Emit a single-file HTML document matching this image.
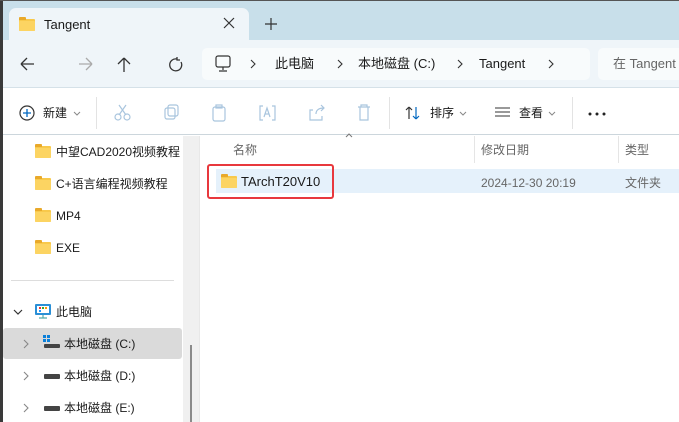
<!DOCTYPE html>
<html><head><meta charset="utf-8"><style>
*{margin:0;padding:0;box-sizing:border-box}
body{width:679px;height:422px;overflow:hidden;position:relative;background:#fff;font-family:"Liberation Sans","Noto Sans CJK SC",sans-serif;font-size:12px;color:#1a1a1a}
.a{position:absolute}
.fold{position:absolute;width:16px;height:12px;background:#f8c94b;border-radius:1px}
.fold:before{content:"";position:absolute;left:0;top:-2px;width:7px;height:3px;background:#e9a92a;border-radius:1px 1px 0 0}
.fold:after{content:"";position:absolute;left:0;top:2px;width:16px;height:10px;background:#fcd462;border-radius:1px}
.t{position:absolute;white-space:nowrap;line-height:16px}
.g{color:#888}
.c13{font-size:13px}
</style></head><body>
<div class="a" style="left:0;top:0;width:679px;height:40px;background:#c8dfea"></div>
<div class="a" style="left:0;top:0;width:3px;height:422px;background:#3a3a3a"></div>
<div class="a" style="left:0;top:0;width:679px;height:1px;background:#555"></div>
<div class="a" style="left:9px;top:8px;width:240px;height:34px;background:#eff5f9;border-radius:7px 7px 0 0"></div>
<div class="fold" style="left:19px;top:19px"></div>
<div class="t c13" style="left:44px;top:17px">Tangent</div>
<svg class="a" style="left:223px;top:17px" width="12" height="12" stroke="#333" stroke-width="1.2"><path d="M1 1l10 10M11 1L1 11"/></svg>
<svg class="a" style="left:265px;top:18px" width="12" height="12" stroke="#333" stroke-width="1.2"><path d="M6 0v12M0 6h12"/></svg>
<div class="a" style="left:3px;top:40px;width:676px;height:48px;background:#eff5f9;border-bottom:1px solid #d5e1e8"></div>
<svg class="a" style="left:18px;top:55px" width="170" height="18" fill="none" stroke-width="1.3">
<path d="M3 9h13M3 9l6-6M3 9l6 6" stroke="#333"/>
<path d="M61 9h13M74 9l-6-6M74 9l-6 6" stroke="#aaa"/>
<path d="M106 3v14M106 3l-6 6M106 3l6 6" stroke="#333"/>
<path d="M159 4a6 6 0 1 0 4 3M159 2v3h3" stroke="#333"/>
</svg>
<div class="a" style="left:202px;top:48px;width:388px;height:32px;background:#f8fbfc;border-radius:5px"></div>
<svg class="a" style="left:214px;top:55px" width="20" height="18" fill="none" stroke="#333" stroke-width="1.2"><rect x="2" y="1" width="14" height="11" rx="2"/><path d="M9 12v3M5 16h8"/></svg>
<svg class="a" style="left:250px;top:59px" width="320" height="10" fill="none" stroke="#333" stroke-width="1.1"><path d="M1 1l4 4-4 4M88 1l4 4-4 4M208 1l4 4-4 4M299 1l4 4-4 4"/></svg>
<div class="t c13" style="left:275px;top:56px">此电脑</div>
<div class="t c13" style="left:358px;top:56px">本地磁盘 (C:)</div>
<div class="t c13" style="left:479px;top:56px">Tangent</div>
<div class="a" style="left:598px;top:48px;width:90px;height:32px;background:#f8fbfc;border-radius:5px"></div>
<div class="t c13" style="left:613px;top:56px;color:#666">在 Tangent</div>
<div class="a" style="left:3px;top:89px;width:676px;height:46px;background:#fff;border-bottom:1px solid #ccd6dc"></div>
<svg class="a" style="left:18px;top:104px" width="18" height="18" fill="none"><circle cx="9" cy="9" r="7" stroke="#333" stroke-width="1.2"/><path d="M9 5v8M5 9h8" stroke="#0067c0" stroke-width="1.3"/></svg>
<div class="t" style="left:43px;top:105px">新建</div>
<svg class="a" style="left:73px;top:111px" width="8" height="5" fill="none" stroke="#888"><path d="M1 1l3 3 3-3"/></svg>
<div class="a" style="left:96px;top:97px;width:1px;height:32px;background:#e3e3e3"></div>
<svg class="a" style="left:112px;top:102px" width="260" height="22" fill="none" stroke="#a9c5de" stroke-width="1.2">
<circle cx="6" cy="15" r="3"/><circle cx="15" cy="15" r="3"/><path d="M7 13L14 3M14 13L7 3"/>
<rect x="53" y="6" width="10" height="11" rx="2"/><rect x="56" y="3" width="10" height="11" rx="2"/>
<rect x="101" y="5" width="12" height="14" rx="2"/><rect x="104" y="3" width="6" height="3"/>
<path d="M151 4h-3v14h3M160 4h3v14h-3M152 15l3-9 3 9M153 12h4"/>
<path d="M201 8h-3v10h12v-4M204 12c0-4 3-6 8-6M209 3l3 3-3 3"/>
<path d="M246 5h12M249 5v-2h6v2M248 5v13h8V5"/>
</svg>
<div class="a" style="left:389px;top:97px;width:1px;height:32px;background:#e3e3e3"></div>
<svg class="a" style="left:404px;top:104px" width="20" height="18" fill="none" stroke-width="1.2"><path d="M5 15V3M5 3l-3 3M5 3l3 3" stroke="#333"/><path d="M12 3v12M12 15l-3-3M12 15l3-3" stroke="#0067c0"/></svg>
<div class="t" style="left:430px;top:105px">排序</div>
<svg class="a" style="left:459px;top:111px" width="8" height="5" fill="none" stroke="#888"><path d="M1 1l3 3 3-3"/></svg>
<svg class="a" style="left:494px;top:106px" width="18" height="14" stroke="#333" stroke-width="1.1"><path d="M1 2h15M1 6h15M1 10h15"/></svg>
<div class="t" style="left:519px;top:105px">查看</div>
<svg class="a" style="left:548px;top:111px" width="8" height="5" fill="none" stroke="#888"><path d="M1 1l3 3 3-3"/></svg>
<div class="a" style="left:572px;top:97px;width:1px;height:32px;background:#e3e3e3"></div>
<svg class="a" style="left:588px;top:112px" width="20" height="4" fill="#222"><circle cx="2" cy="2" r="1.5"/><circle cx="9" cy="2" r="1.5"/><circle cx="16" cy="2" r="1.5"/></svg>
<!-- sidebar -->
<div class="a" style="left:183px;top:136px;width:16px;height:286px;background:#f0f0f0"></div>
<div class="a" style="left:190px;top:345px;width:2px;height:77px;background:#8a8a8a"></div>
<div class="a" style="left:199px;top:136px;width:1px;height:286px;background:#e8e8e8"></div>
<div class="fold" style="left:35px;top:146px"></div><div class="t" style="left:56px;top:144px">中望CAD2020视频教程</div>
<div class="fold" style="left:35px;top:178px"></div><div class="t" style="left:56px;top:176px">C+语言编程视频教程</div>
<div class="fold" style="left:35px;top:210px"></div><div class="t" style="left:56px;top:208px">MP4</div>
<div class="fold" style="left:35px;top:242px"></div><div class="t" style="left:56px;top:240px">EXE</div>
<div class="a" style="left:11px;top:280px;width:163px;height:1px;background:#ddd"></div>
<svg class="a" style="left:13px;top:309px" width="10" height="6" fill="none" stroke="#333" stroke-width="1.2"><path d="M1 1l4 4 4-4"/></svg>
<svg class="a" style="left:34px;top:303px" width="18" height="17"><rect x="1" y="1" width="16" height="11" rx="1" fill="#2a8fd6"/><rect x="3" y="3" width="12" height="7" fill="#fff"/><rect x="5" y="4" width="2" height="2" fill="#e33"/><rect x="8" y="4" width="2" height="2" fill="#3a3"/><rect x="11" y="4" width="2" height="2" fill="#f90"/><rect x="5" y="7" width="2" height="2" fill="#29f"/><path d="M9 12v3M5 15h8" stroke="#5aa" stroke-width="1.2"/></svg>
<div class="t" style="left:56px;top:304px">此电脑</div>
<div class="a" style="left:3px;top:328px;width:179px;height:31px;background:#dadada;border-radius:3px"></div>
<svg class="a" style="left:23px;top:339px" width="6" height="80" fill="none" stroke="#888" stroke-width="1.1"><path d="M1 1l4 4-4 4M1 33l4 4-4 4M1 65l4 4-4 4"/></svg>
<svg class="a" style="left:43px;top:335px" width="18" height="14"><rect x="0" y="0" width="3" height="3" fill="#0a7fd9"/><rect x="4" y="0" width="3" height="3" fill="#0a7fd9"/><rect x="0" y="4" width="3" height="3" fill="#0a7fd9"/><rect x="4" y="4" width="3" height="3" fill="#0a7fd9"/><rect x="1" y="9" width="16" height="4" rx="1" fill="#444"/></svg>
<div class="t" style="left:64px;top:336px">本地磁盘 (C:)</div>
<div class="a" style="left:44px;top:374px;width:16px;height:5px;background:#444;border-radius:1px"></div>
<div class="t" style="left:64px;top:368px">本地磁盘 (D:)</div>
<div class="a" style="left:44px;top:406px;width:16px;height:5px;background:#444;border-radius:1px"></div>
<div class="t" style="left:64px;top:400px">本地磁盘 (E:)</div>
<!-- content -->
<svg class="a" style="left:345px;top:133px" width="8" height="5" fill="none" stroke="#777"><path d="M1 4l3-3 3 3"/></svg>
<div class="t" style="left:233px;top:142px;color:#666">名称</div>
<div class="a" style="left:474px;top:136px;width:1px;height:27px;background:#e5e5e5"></div>
<div class="t" style="left:481px;top:142px;color:#666">修改日期</div>
<div class="a" style="left:618px;top:136px;width:1px;height:27px;background:#e5e5e5"></div>
<div class="t" style="left:625px;top:142px;color:#666">类型</div>
<div class="a" style="left:216px;top:169px;width:463px;height:24px;background:#e5f1fb"></div>
<div class="a" style="left:207px;top:164px;width:127px;height:35px;border:2px solid #e8383d;border-radius:3px"></div>
<div class="fold" style="left:221px;top:176px"></div>
<div class="t c13" style="left:241px;top:174px">TArchT20V10</div>
<div class="t" style="left:481px;top:175px;color:#666">2024-12-30 20:19</div>
<div class="t" style="left:625px;top:175px;color:#666">文件夹</div>
</body></html>
